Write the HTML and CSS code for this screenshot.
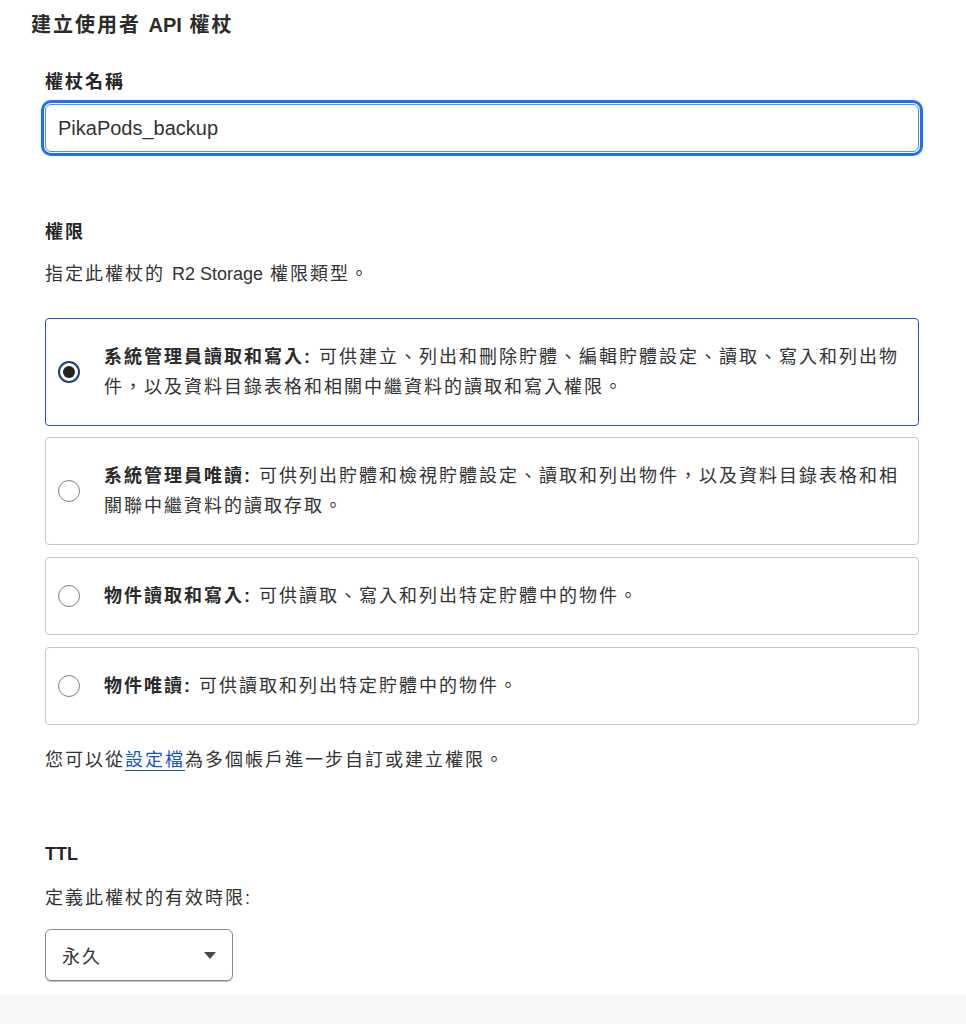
FILE: index.html
```html
<!DOCTYPE html>
<html lang="zh-Hant">
<head>
<meta charset="utf-8">
<title>建立使用者 API 權杖</title>
<link rel="stylesheet" href="styles.css">
</head>
<body>
<div class="page">
  <h1 class="title">建立使用者 <span class="latin">API</span> 權杖</h1>
  <div class="form">
    <div class="field">
      <label class="label" for="tname">權杖名稱</label>
      <div class="input-wrap">
        <input id="tname" class="input" type="text" value="PikaPods_backup">
      </div>
    </div>

    <div class="section perms">
      <div class="label">權限</div>
      <p class="desc">指定此權杖的 <span class="latin">R2 Storage</span> 權限類型。</p>
      <div class="options">
        <div class="option selected">
          <span class="radio checked"></span>
          <div class="option-text"><b>系統管理員讀取和寫入:</b> 可供建立、列出和刪除貯體、編輯貯體設定、讀取、寫入和列出物件，以及資料目錄表格和相關中繼資料的讀取和寫入權限。</div>
        </div>
        <div class="option">
          <span class="radio"></span>
          <div class="option-text"><b>系統管理員唯讀:</b> 可供列出貯體和檢視貯體設定、讀取和列出物件，以及資料目錄表格和相關聯中繼資料的讀取存取。</div>
        </div>
        <div class="option">
          <span class="radio"></span>
          <div class="option-text"><b>物件讀取和寫入:</b> 可供讀取、寫入和列出特定貯體中的物件。</div>
        </div>
        <div class="option">
          <span class="radio"></span>
          <div class="option-text"><b>物件唯讀:</b> 可供讀取和列出特定貯體中的物件。</div>
        </div>
      </div>
      <p class="note">您可以從<a href="#" class="link">設定檔</a>為多個帳戶進一步自訂或建立權限。</p>
    </div>

    <div class="section ttl">
      <div class="label"><span class="latin">TTL</span></div>
      <p class="desc">定義此權杖的有效時限:</p>
      <div class="select">
        <span class="select-value">永久</span>
        <span class="caret"></span>
      </div>
    </div>
  </div>
</div>
<div class="footer-band"></div>
</body>
</html>
```

FILE: styles.css
```css
* { box-sizing: border-box; }

html, body {
  margin: 0;
  padding: 0;
  background: #ffffff;
}

body {
  font-family: "Liberation Sans", "Noto Sans CJK TC", sans-serif;
  color: #333333;
  font-size: 18px;
  letter-spacing: 2px;
}

.latin { letter-spacing: 0; }

.page {
  padding: 9px 0 0 31px;
  height: 995px;
}

.title {
  margin: 0;
  font-size: 20px;
  line-height: 32px;
  font-weight: 700;
  color: #2b2b2b;
}

.form {
  padding-left: 14px;
  width: 888px;
}

.field {
  margin-top: 29px;
}

.label {
  display: block;
  font-weight: 700;
  font-size: 18px;
  line-height: 24px;
  color: #262626;
}

.input-wrap {
  margin-top: 10px;
  width: 874px;
}

.input {
  display: block;
  width: 100%;
  height: 48px;
  border: 1px solid #4d8ff0;
  border-radius: 6px;
  padding: 0 12px;
  font-family: "Liberation Sans", "Noto Sans CJK TC", sans-serif;
  font-size: 20px;
  color: #333333;
  letter-spacing: 0;
  outline: none;
  box-shadow: 0 0 0 1px #ffffff, 0 0 0 4px #1f6ff0;
}

.perms {
  margin-top: 68px;
}

.desc {
  margin: 16px 0 0;
  line-height: 28px;
}

.options {
  margin-top: 30px;
  display: flex;
  flex-direction: column;
  gap: 12px;
  width: 874px;
}

.option {
  display: flex;
  align-items: center;
  border: 1px solid #c6c6c6;
  border-radius: 4px;
  padding: 23px 9px 23px 12px;
}

.option.selected {
  border-color: #1f5cc0;
  margin-bottom: -1px;
}

.radio {
  flex: none;
  width: 22px;
  height: 22px;
  border-radius: 50%;
  border: 1.5px solid #7f7f7f;
  margin-right: 24px;
  display: flex;
  align-items: center;
  justify-content: center;
  background: #fff;
}

.radio.checked {
  border: 2px solid #1d3f78;
}

.radio.checked::after {
  content: "";
  width: 12px;
  height: 12px;
  border-radius: 50%;
  background: #222222;
}

.option-text {
  flex: 1;
  line-height: 30px;
  color: #333333;
}

.option-text b {
  font-weight: 700;
  color: #2b2b2b;
}

.note {
  margin: 21px 0 0;
  line-height: 28px;
}

.link {
  color: #1557c0;
  text-decoration: underline;
  text-decoration-color: #1557c0;
  text-underline-offset: 4px;
}

.ttl {
  margin-top: 68px;
}

.ttl .desc {
  margin-top: 18px;
}

.select {
  margin-top: 17px;
  width: 188px;
  height: 52px;
  border: 1px solid #8a8a8a;
  border-radius: 6px;
  display: flex;
  align-items: center;
  justify-content: space-between;
  padding: 0 16px 0 16px;
  box-shadow: 0 1px 0 #bdbdbd;
}

.select-value {
  font-size: 18px;
  color: #333333;
}

.caret {
  width: 0;
  height: 0;
  border-left: 6px solid transparent;
  border-right: 6px solid transparent;
  border-top: 7px solid #4a4a4a;
}

.footer-band {
  height: 29px;
  background: #f8f8f8;
}
```
